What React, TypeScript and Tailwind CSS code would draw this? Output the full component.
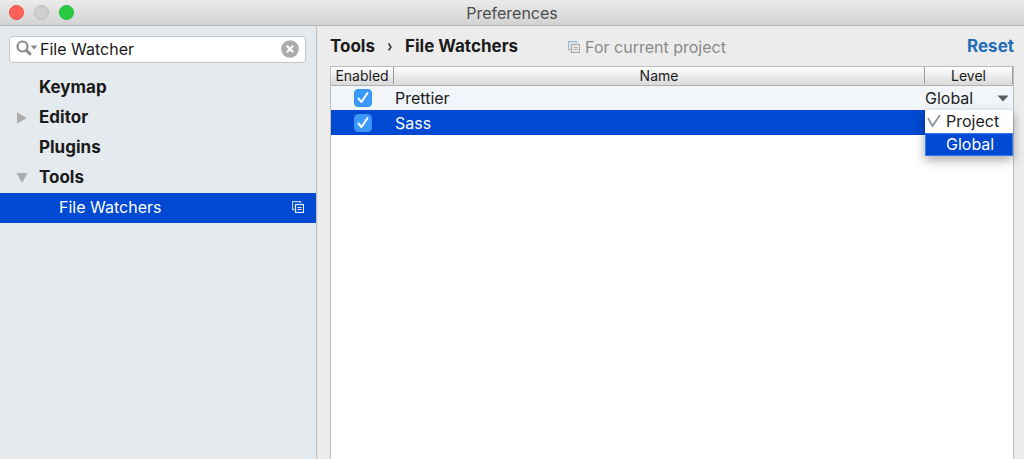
import React, { useState } from 'react';
import clsx from 'clsx';

type Watcher = { name: string; enabled: boolean };

const LEVELS = ['Project', 'Global'];

const TREE = [
  { label: 'Keymap' },
  { label: 'Editor', arrow: 'right' },
  { label: 'Plugins' },
  { label: 'Tools', arrow: 'down' },
];

const ProjectIcon: React.FC<{ back: string; front: string }> = ({ back, front }) => (
  <svg width="12" height="12" viewBox="0 0 12 12" fill="none" className="shrink-0" aria-hidden="true">
    <path d="M2.5 8.5H.5V.5h8v1.5" stroke={back} strokeWidth="1.300" />
    <rect x="3.5" y="3.5" width="8" height="8" stroke={front} strokeWidth="1.200" />
    <path d="M5.5 6.5h4M5.5 8.5h4" stroke={front} />
  </svg>
);

const TreeArrow: React.FC<{ dir?: string }> = ({ dir }) => (
  <svg width="12" height="12" viewBox="0 0 12 12" fill="#acacac" aria-hidden="true">
    {dir === 'right' && <path d="M1 .5v11l10-5.500z" />}
    {dir === 'down' && <path d="M.5 1h11L6 11z" />}
  </svg>
);

const TitleBar: React.FC = () => (
  <header className="relative flex h-[26px] items-center justify-center border-b border-[#b5b5b5] bg-linear-to-b from-[#ebebeb] to-[#d3d3d3]">
    <div className="absolute left-[9px] flex gap-[10px]">
      <button aria-label="Close" className="size-[15px] rounded-full border border-[#ee5048] bg-[#ff6058]" />
      <button aria-label="Minimize" className="size-[15px] rounded-full border border-[#bababa] bg-[#cfcfcf]" />
      <button aria-label="Zoom" className="size-[15px] rounded-full border border-[#1fb932] bg-[#29cc41]" />
    </div>
    <h1 className="text-base text-[#4d4d4d]">Preferences</h1>
  </header>
);

const Sidebar: React.FC = () => {
  const [query, setQuery] = useState('File Watcher');

  return (
    <aside className="w-[317px] shrink-0 border-r border-[#bfc3c7] bg-[#e5eaef] pt-[10px]">
      <div className="mr-[10px] mb-[10px] ml-[9px] flex h-[27px] items-center rounded-sm border border-[#c3c6c9] bg-white pr-[6px] pb-[2px] pl-[6px]">
        <svg width="22" height="17" viewBox="0 0 22 17" fill="none" className="shrink-0" aria-hidden="true">
          <circle cx="6.500" cy="6.500" r="5" stroke="#8c8c8c" strokeWidth="2.200" />
          <path d="M10 10l4.800 4.800" stroke="#8c8c8c" strokeWidth="3" />
          <path d="M14.500 5.500h7L18 9.500z" fill="#8c8c8c" />
        </svg>
        <input
          aria-label="Search settings"
          className="min-w-0 flex-1 pl-[2px] outline-none"
          value={query}
          onChange={e => setQuery(e.target.value)}
        />
        <button aria-label="Clear search" onClick={() => setQuery('')}>
          <svg width="18" height="18" viewBox="0 0 18 18">
            <circle cx="9" cy="9" r="8.800" fill="#acacac" />
            <path d="M5.800 5.800l6.400 6.400M12.200 5.800l-6.400 6.400" stroke="#fff" strokeWidth="2.200" />
          </svg>
        </button>
      </div>

      <nav>
        <ul>
          {TREE.map(node => (
            <li key={node.label}>
              <button className="flex h-[30px] w-full items-center gap-[11px] pl-4 text-[17px] font-bold">
                <TreeArrow dir={node.arrow} />
                {node.label}
              </button>
            </li>
          ))}
          <li>
            <button className="flex h-[30px] w-full items-center justify-between bg-[#0049d2] pr-3 pb-[2px] pl-[59px] text-white">
              File Watchers
              <ProjectIcon back="#b9d0f5" front="#e6eefb" />
            </button>
          </li>
        </ul>
      </nav>
    </aside>
  );
};

const EnabledBox: React.FC<{ label: string; checked: boolean; onChange: () => void }> = ({ label, checked, onChange }) => (
  <label className="relative mx-auto block size-[18px]">
    <input
      type="checkbox"
      aria-label={label}
      checked={checked}
      onChange={onChange}
      className="block size-[18px] appearance-none rounded-sm border border-[#b5b5b5] bg-white checked:border-[#3593fb] checked:bg-[#3b99fc]"
    />
    {checked && (
      <svg width="18" height="18" viewBox="0 0 18 18" fill="none" className="pointer-events-none absolute inset-0">
        <path d="M4.500 9.500l3 3.500 6-9" stroke="#fff" strokeWidth="2" strokeLinecap="round" strokeLinejoin="round" />
      </svg>
    )}
  </label>
);

const LevelCell: React.FC = () => {
  const [level, setLevel] = useState('Global');

  return (
    <div className="relative">
      <select
        aria-label="Level"
        value={level}
        onChange={e => setLevel(e.target.value)}
        className="block w-full appearance-none outline-none"
      >
        {LEVELS.map(l => <option key={l}>{l}</option>)}
      </select>
      <svg width="12" height="7" viewBox="0 0 12 7" className="pointer-events-none absolute top-[9px] right-1">
        <path d="M.5.5h11L6 6.500z" fill="#5c5c5c" />
      </svg>
      {/* Open list, hangs below the cell */}
      <ul role="listbox" aria-label="Level options" className="absolute inset-x-0 top-6 z-10 bg-white shadow-[0_4px_10px_rgba(0,0,0,0.35)]">
        {LEVELS.map(l => (
          <li
            key={l}
            role="option"
            aria-selected={l === level}
            onClick={() => setLevel(l)}
            className={clsx(
              'flex h-[23px] items-center gap-[5px] pl-[2px]',
              l === level && 'border border-[#2f7bf0] bg-[#0049d2] pl-px text-white',
            )}
          >
            <svg width="14" height="14" viewBox="0 0 14 14" fill="none" className="shrink-0">
              {l === 'Project' && <path d="M1 4l4.500 8L13 1" stroke="#8e979f" strokeWidth="1.800" />}
            </svg>
            {l}
          </li>
        ))}
      </ul>
    </div>
  );
};

const WatchersTable: React.FC = () => {
  const [watchers, setWatchers] = useState<Watcher[]>([
    { name: 'Prettier', enabled: true },
    { name: 'Sass', enabled: true },
  ]);

  const toggle = (name: string) =>
    setWatchers(ws => ws.map(w => (w.name === name ? { ...w, enabled: !w.enabled } : w)));

  return (
    <div className="flex-1 border border-b-0 border-[#bdbdbd] bg-white">
      <table className="w-full table-fixed border-collapse">
        <thead className="bg-linear-to-b from-white to-[#d9d9d9] text-sm leading-4">
          <tr className="h-[18px] border-b border-[#b0b0b0]">
            <th className="w-[63px] p-0 font-normal"><div className="border-r border-[#9c9c9c] pt-px">Enabled</div></th>
            <th className="p-0 font-normal"><div className="border-r border-[#9c9c9c] pt-px">Name</div></th>
            <th className="w-[88px] p-0 font-normal"><div className="border-r border-[#9c9c9c] pt-px">Level</div></th>
          </tr>
        </thead>
        <tbody>
          {watchers.map((w, i) => (
            <tr key={w.name} className={clsx('h-[25px]', i === 1 ? 'bg-[#0049d2] text-white' : 'bg-[#f2f5fa]')}>
              <td className="p-0">
                <EnabledBox label={`Enable ${w.name}`} checked={w.enabled} onChange={() => toggle(w.name)} />
              </td>
              <td className="p-0 pl-px">{w.name}</td>
              <td className="p-0 text-[#1e1e1e]">{i === 0 && <LevelCell />}</td>
            </tr>
          ))}
        </tbody>
      </table>
    </div>
  );
};

export default function App() {
  return (
    <div className="flex min-h-screen flex-col bg-[#ececec] font-['Inter',sans-serif] text-base text-[#1a1a1a]">
      <TitleBar />
      <div className="flex flex-1">
        <Sidebar />
        <main className="flex min-w-0 flex-1 flex-col border-l border-[#e4e4e4] pr-[10px] pl-3">
          <div className="flex h-10 items-center pt-[2px]">
            <h2 className="flex items-center text-[17px] font-bold">
              Tools
              <svg width="6" height="10" viewBox="0 0 6 10" fill="none" className="mx-3">
                <path d="M1.500 1.500l2.500 3.500-2.500 3.500" stroke="#333" strokeWidth="1.500" />
              </svg>
              File Watchers
            </h2>
            <p className="ml-[50px] flex items-center gap-[5px] text-[#8a8a8a]">
              <ProjectIcon back="#8fbfe0" front="#a9a9a9" />
              For current project
            </p>
            <button className="ml-auto text-[17px] font-bold text-[#236db8]">Reset</button>
          </div>
          <WatchersTable />
        </main>
      </div>
    </div>
  );
}
